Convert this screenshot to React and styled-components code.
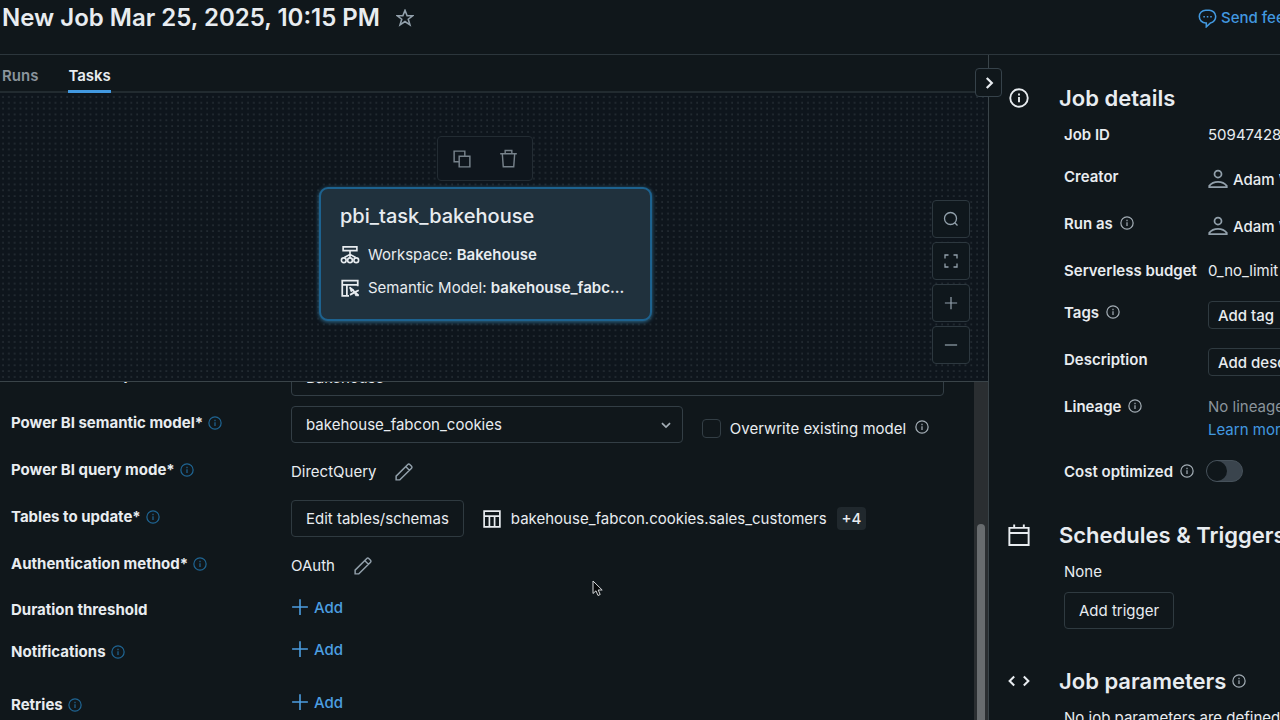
import React from 'react';
import styled, { createGlobalStyle } from 'styled-components';

const GlobalStyle = createGlobalStyle`
    * {
        box-sizing: border-box;
    }
    body {
        margin: 0;
        background: #10171b;
        color: #e8ecf0;
        font-family: Inter, "Liberation Sans", sans-serif;
        font-size: 15px;
        line-height: 23px;
    }
    button, input, select {
        font: inherit;
        color: inherit;
    }
    a {
        color: #4299e0;
        text-decoration: none;
    }
    svg {
        flex: none;
    }
`;

// layout
const Page = styled.div`
    display: flex;
    flex-direction: column;
    height: 100vh;
    overflow: hidden;
`;
const Header = styled.header`
    display: flex;
    align-items: flex-start;
    justify-content: space-between;
    height: 55px;
    padding: 4px 0 0 2px;
    border-bottom: 1px solid #2c363c;
`;
const TitleGroup = styled.div`
    display: flex;
    align-items: center;
    gap: 16px;
`;
const Title = styled.h1`
    margin: 0;
    font-size: 24px;
    line-height: 28px;
    font-weight: 600;
`;
const Feedback = styled.a`
    display: flex;
    align-items: center;
    gap: 4px;
    width: 82px;
    line-height: 28px;
    font-weight: 500;
    white-space: nowrap;
`;
const Main = styled.main`
    flex: 1;
    min-height: 0;
    display: grid;
    grid-template-columns: minmax(0, 1fr) 291px;
`;
const Left = styled.div`
    display: flex;
    flex-direction: column;
    min-height: 0;
    position: relative;
    border-right: 1px solid #3a4449;
`;
const PlainButton = styled.button`
    display: flex;
    align-items: center;
    justify-content: center;
    padding: 0;
    border: 0;
    background: none;
    color: ${(p) => p.$color || '#92a0ab'};
    cursor: pointer;
`;

// tabs
const Tabs = styled.nav`
    display: flex;
    gap: 30px;
    padding-left: 2px;
    border-bottom: 2px solid #222b30;
`;
const Tab = styled.a`
    margin-bottom: -2px;
    padding: 9px 0 3px;
    font-weight: 600;
    color: ${(p) => (p.$active ? '#e8ecf0' : '#8a949c')};
    border-bottom: 3px solid ${(p) => (p.$active ? '#4299e0' : 'transparent')};
`;
const Collapse = styled(PlainButton)`
    position: absolute;
    z-index: 2;
    top: 13px;
    right: -14px;
    width: 27px;
    height: 29px;
    border: 1px solid #36424a;
    border-radius: 4px;
    background: #10171b;
`;

// canvas
const Canvas = styled.section`
    position: relative;
    height: 289px;
    flex: none;
    overflow: hidden;
    background: #0e151c;
    border-bottom: 1px solid #3a4449;
`;
const Dots = styled.svg`
    display: block;
    width: 100%;
    height: 100%;
`;
const NodeToolbar = styled.div`
    position: absolute;
    top: 43px;
    left: calc(50% - 57px);
    display: flex;
    width: 96px;
    height: 45px;
    border: 1px solid #232c33;
    border-radius: 4px;
    background: #0f161d;
    button {
        flex: 1;
    }
`;
const Node = styled.article`
    position: absolute;
    top: 94px;
    left: calc(50% - 175px);
    width: 333px;
    height: 134px;
    padding: 13px 19px;
    border: 2px solid #1d628f;
    border-radius: 9px;
    background: #20313d;
    box-shadow: 0 1px 4px #2f6d8f;
`;
const NodeTitle = styled.h2`
    margin: 0 0 8px;
    font-size: 20px;
    line-height: 28px;
    font-weight: 500;
`;
const NodeLine = styled.div`
    display: flex;
    align-items: center;
    gap: 8px;
    height: 33px;
    white-space: nowrap;
    b {
        font-weight: 600;
    }
`;
const Controls = styled.div`
    position: absolute;
    right: 18px;
    bottom: 17px;
    display: grid;
    gap: 4px;
`;
const Control = styled(PlainButton)`
    width: 38px;
    height: 38px;
    border: 1px solid #2d383f;
    border-radius: 4px;
    background: #0f171c;
`;

// task form
const FormPane = styled.section`
    flex: 1;
    min-height: 0;
    display: flex;
    overflow: hidden;
`;
const Form = styled.form`
    flex: 1;
    min-width: 0;
    margin-top: -24px;
    padding: 0 30px 0 11px;
`;
const FormRow = styled.div`
    display: grid;
    grid-template-columns: 280px minmax(0, 1fr);
    min-height: ${(p) => (p.$height || 37)}px;
    margin-bottom: 10px;
`;
const FieldLabel = styled.div`
    display: flex;
    align-items: center;
    align-self: start;
    gap: 5px;
    padding-top: ${(p) => (p.$low ? 4 : 5)}px;
    font-weight: 700;
    svg {
        color: #1f6593;
    }
`;
const FieldValue = styled.div`
    display: flex;
    align-items: ${(p) => (p.$top ? 'flex-start' : 'center')};
    gap: 19px;
    white-space: nowrap;
`;
const TextBox = styled.input`
    width: 100%;
    height: 38px;
    padding: 0 14px;
    border: 1px solid #333e45;
    border-radius: 4px;
    background: transparent;
`;
const SelectBox = styled.div`
    flex: 0 0 60%;
    display: grid;
    align-items: center;
    > * {
        grid-area: 1 / 1;
    }
    svg {
        justify-self: end;
        margin-right: 12px;
        color: #a3adb5;
        pointer-events: none;
    }
    select {
        appearance: none;
        height: 37px;
        padding: 0 14px;
        border: 1px solid #333e45;
        border-radius: 4px;
        background: #10171b;
    }
`;
const CheckLabel = styled.label`
    display: flex;
    align-items: center;
    gap: 9px;
    padding-top: 8px;
    input {
        appearance: none;
        width: 19px;
        height: 19px;
        margin: 0;
        border: 1px solid #333e45;
        border-radius: 4px;
    }
    svg {
        margin-bottom: 4px;
        color: #a3adb5;
    }
`;
const Button = styled.button`
    height: ${(p) => (p.$small ? 28 : 37)}px;
    padding: 0 ${(p) => (p.$small ? 9 : 14)}px;
    border: 1px solid #2f3a40;
    border-radius: 4px;
    background: transparent;
    font-weight: ${(p) => (p.$small ? 500 : 400)};
    white-space: nowrap;
    cursor: pointer;
`;
const TableName = styled.div`
    display: flex;
    align-items: center;
    gap: 10px;
`;
const Badge = styled.span`
    padding: 0 5px;
    border-radius: 4px;
    background: #20282d;
    font-weight: 500;
`;
const AddButton = styled(PlainButton)`
    gap: 5px;
    height: 26px;
    color: #4c9fe2;
    font-weight: 500;
`;
const ScrollTrack = styled.div`
    display: flex;
    align-items: flex-end;
    justify-content: center;
    width: 14px;
    background: #2a2e31;
`;
const ScrollThumb = styled.div`
    width: 8px;
    height: 58%;
    border-radius: 4px 4px 0 0;
    background: #686c6f;
`;

// side panel
const Side = styled.aside`
    display: flex;
    flex-direction: column;
    gap: 38px;
    padding: 29px 0 0 19px;
    overflow: hidden;
`;
const Section = styled.section`
    display: grid;
    grid-template-columns: 22px 1fr;
    column-gap: 29px;
    row-gap: 11px;
    align-items: center;
    white-space: nowrap;
    > svg {
        justify-self: center;
    }
`;
const SectionTitle = styled.h2`
    display: flex;
    align-items: center;
    gap: 6px;
    margin: 0;
    font-size: 22px;
    line-height: 28px;
    font-weight: 600;
    svg {
        color: #a3adb5;
    }
`;
const SectionBody = styled.div`
    grid-column: 2;
    display: flex;
    flex-direction: column;
    align-items: flex-start;
    gap: ${(p) => (p.$gap || 9)}px;
    padding-left: 5px;
`;
const Detail = styled.div`
    display: grid;
    grid-template-columns: 144px auto;
`;
const DetailLabel = styled.div`
    display: flex;
    align-items: center;
    align-self: start;
    gap: 7px;
    font-weight: 600;
    svg {
        margin-bottom: 2px;
        color: #a3adb5;
    }
`;
const Person = styled.div`
    display: flex;
    align-items: center;
    gap: 5px;
    height: 28px;
    font-weight: 500;
    svg {
        color: #92a0ab;
    }
`;
const Muted = styled.div`
    color: #8a949c;
`;
const Switch = styled.input`
    appearance: none;
    display: flex;
    align-items: center;
    width: 37px;
    height: 22px;
    margin: 0 0 0 -2px;
    border: 1px solid #46515a;
    border-radius: 11px;
    background: #3a444d;
    &::before {
        content: '';
        width: 20px;
        height: 20px;
        border-radius: 50%;
        background: #10171b;
    }
`;

// icons
const Icon = ({ size = 16, width = 1.5, children }) => (
    <svg width={size} height={size} viewBox="0 0 16 16" fill="none" stroke="currentColor" strokeWidth={width} aria-hidden="true">
        {children}
    </svg>
);
const InfoIcon = ({ size = 14, width = 1.4 }) => (
    <Icon size={size} width={width}>
        <circle cx="8" cy="8" r="7" />
        <path d="M8 7.2v4.2M8 4.4v1.5" />
    </Icon>
);
const StarIcon = () => (
    <Icon size={18} width={1.4}>
        <path d="M8 1.2 9.900 6h5l-4 3.100 1.500 5L8 11.100l-4.400 3 1.500-5L1.100 6h5z" />
    </Icon>
);
const FeedbackIcon = () => (
    <Icon size={19} width={1.3}>
        <path d="M6.500 1h3a5.400 5.400 0 0 1 1 10.700L7 15v-3.200h-.5A5.400 5.400 0 0 1 6.500 1z" />
        <path d="M4.500 6.500h1.300M7.400 6.500h1.300M10.300 6.500h1.300" />
    </Icon>
);
const CopyIcon = () => (
    <Icon size={18} width={1.3}>
        <path d="M5.500 10.500H1V1h9.500v4.500" />
        <path d="M5.500 5.500H15V15H5.500z" />
    </Icon>
);
const TrashIcon = () => (
    <Icon size={19} width={1.2}>
        <path d="M1 4h14M5.200 4V1.300h5.600V4M2.800 4l.8 11h8.800l.8-11" />
    </Icon>
);
const WorkspaceIcon = () => (
    <Icon size={20} width={1.3}>
        <path d="M2.500 1.500h11v3h-11zM8 4.500v3M3.500 10 8 7.500l4.500 2.500M8 7.500v2.800" />
        <circle cx="3" cy="12.200" r="1.900" />
        <circle cx="8" cy="12.200" r="1.900" />
        <circle cx="13" cy="12.200" r="1.900" />
    </Icon>
);
const ModelIcon = () => (
    <Icon size={20} width={1.4}>
        <path d="M7.200 14.300H1.800V2h12.400v4.500M1.800 5.500h12.400M5.500 5.500v8.800" />
        <path d="m7.800 7.500 7 6.500M15 9.800l-3.500 1.700-3.500 2" />
        <path d="m7.800 7.500 1 3.500 2.200-1.500zM11.500 11.500l3.500 2.700h-2.500z" fill="currentColor" strokeWidth="0.600" />
    </Icon>
);
const SearchIcon = () => (
    <Icon width={1.3}>
        <circle cx="7.500" cy="7.500" r="6" />
        <path d="m11.800 11.800 2.700 2.700" />
    </Icon>
);
const FitIcon = () => (
    <Icon width={1.3}>
        <path d="M2 5.500V2h3.500M10.500 2H14v3.500M14 10.500V14h-3.500M5.500 14H2v-3.500" />
    </Icon>
);
const PlusIcon = ({ size = 18 }) => (
    <Icon size={size} width={1.4}>
        <path d="M8 1v14M1 8h14" />
    </Icon>
);
const MinusIcon = () => (
    <Icon size={14} width={1.4}>
        <path d="M1 8h14" />
    </Icon>
);
const ChevronRight = () => (
    <Icon size={18} width={2}>
        <path d="m6 3.500 4.500 4.500L6 12.500" />
    </Icon>
);
const ChevronDown = () => (
    <Icon size={10} width={2.6}>
        <path d="m1.500 5 6.500 6.500L14.500 5" />
    </Icon>
);
const PencilIcon = () => (
    <Icon size={18} width={1.3}>
        <path d="M1 15v-3.300L11.400 1.300a1.200 1.200 0 0 1 1.700 0l1.600 1.600a1.200 1.200 0 0 1 0 1.700L4.300 15zM9.500 3.200l3.300 3.300" />
    </Icon>
);
const TableIcon = () => (
    <Icon size={18} width={1.5}>
        <path d="M1 1h14v14H1zM1 5.500h14M5.700 5.500V15M10.300 5.500V15" />
    </Icon>
);
const UserIcon = () => (
    <Icon size={20} width={1.4}>
        <circle cx="8" cy="4" r="2.800" />
        <path d="M1 14.500v-1C2.500 11.500 5 10.200 8 10.200s5.500 1.300 7 3.300v1z" />
    </Icon>
);
const CalendarIcon = () => (
    <Icon size={22} width={1.4}>
        <path d="M1 2.800h14v12.500H1zM1 6.500h14M4.500.3v2.500M11.500.3v2.500" />
    </Icon>
);
const CodeIcon = () => (
    <Icon size={22} width={1.5}>
        <path d="M4.500 4.800 1.200 8l3.300 3.200M11.500 4.800 14.800 8l-3.300 3.200" />
    </Icon>
);
const Pointer = styled.svg`
    position: absolute;
    left: 592px;
    bottom: 123px;
`;

const Label = ({ text, low, info = true }) => (
    <FieldLabel $low={low}>
        {text}
        {info && <InfoIcon />}
    </FieldLabel>
);

// data
const addRows = [
    { label: 'Duration threshold', info: false, height: 32 },
    { label: 'Notifications', info: true, height: 43 },
    { label: 'Retries', info: true, height: 32 },
];

const TaskForm = () => (
    <FormPane>
        <Form>
            <FormRow>
                <Label text="Power BI workspace*" />
                <FieldValue>
                    <TextBox aria-label="Power BI workspace" defaultValue="Bakehouse" />
                </FieldValue>
            </FormRow>
            <FormRow>
                <Label text="Power BI semantic model*" />
                <FieldValue>
                    <SelectBox>
                        <select aria-label="Power BI semantic model">
                            <option>bakehouse_fabcon_cookies</option>
                        </select>
                        <ChevronDown />
                    </SelectBox>
                    <CheckLabel>
                        <input type="checkbox" />
                        Overwrite existing model
                        <InfoIcon />
                    </CheckLabel>
                </FieldValue>
            </FormRow>
            <FormRow>
                <Label text="Power BI query mode*" />
                <FieldValue>
                    DirectQuery
                    <PlainButton type="button" aria-label="Edit query mode"><PencilIcon /></PlainButton>
                </FieldValue>
            </FormRow>
            <FormRow>
                <Label text="Tables to update*" />
                <FieldValue>
                    <Button type="button">Edit tables/schemas</Button>
                    <TableName>
                        <TableIcon />
                        bakehouse_fabcon.cookies.sales_customers
                        <Badge>+4</Badge>
                    </TableName>
                </FieldValue>
            </FormRow>
            <FormRow>
                <Label text="Authentication method*" />
                <FieldValue>
                    OAuth
                    <PlainButton type="button" aria-label="Edit authentication method"><PencilIcon /></PlainButton>
                </FieldValue>
            </FormRow>
            {addRows.map((row) => (
                <FormRow key={row.label} $height={row.height}>
                    <Label text={row.label} info={row.info} low />
                    <FieldValue $top>
                        <AddButton type="button"><PlusIcon />Add</AddButton>
                    </FieldValue>
                </FormRow>
            ))}
        </Form>
        <ScrollTrack>
            <ScrollThumb />
        </ScrollTrack>
    </FormPane>
);

const JobDetails = () => (
    <Section>
        <InfoIcon size={20} width={1.5} />
        <SectionTitle>Job details</SectionTitle>
        <SectionBody $gap={19}>
            <Detail>
                <DetailLabel>Job ID</DetailLabel>
                <div>509474283</div>
            </Detail>
            <Detail>
                <DetailLabel>Creator</DetailLabel>
                <Person><UserIcon />Adam W</Person>
            </Detail>
            <Detail>
                <DetailLabel>Run as <InfoIcon /></DetailLabel>
                <Person><UserIcon />Adam W</Person>
            </Detail>
            <Detail>
                <DetailLabel>Serverless budget</DetailLabel>
                <div>0_no_limit</div>
            </Detail>
            <Detail>
                <DetailLabel>Tags <InfoIcon /></DetailLabel>
                <Button type="button" $small>Add tag</Button>
            </Detail>
            <Detail>
                <DetailLabel>Description</DetailLabel>
                <Button type="button" $small>Add description</Button>
            </Detail>
            <Detail>
                <DetailLabel>Lineage <InfoIcon /></DetailLabel>
                <div>
                    <Muted>No lineage</Muted>
                    <a href="#lineage">Learn more</a>
                </div>
            </Detail>
            <Detail>
                <DetailLabel as="label" htmlFor="cost">Cost optimized <InfoIcon /></DetailLabel>
                <Switch id="cost" type="checkbox" role="switch" />
            </Detail>
        </SectionBody>
    </Section>
);

const App = () => (
    <Page>
        <GlobalStyle />
        <Header>
            <TitleGroup>
                <Title>New Job Mar 25, 2025, 10:15 PM</Title>
                <PlainButton type="button" aria-label="Favorite"><StarIcon /></PlainButton>
            </TitleGroup>
            <Feedback href="#feedback"><FeedbackIcon />Send feedback</Feedback>
        </Header>
        <Main>
            <Left>
                <Tabs>
                    <Tab href="#runs">Runs</Tab>
                    <Tab href="#tasks" $active>Tasks</Tab>
                </Tabs>
                <Collapse type="button" aria-label="Collapse panel" $color="#e8ecf0"><ChevronRight /></Collapse>
                <Canvas>
                    <Dots aria-hidden="true">
                        <defs>
                            <pattern id="dots" width="5.833" height="5.833" patternUnits="userSpaceOnUse">
                                <circle cx="3" cy="4" r="0.8" fill="#323b42" />
                            </pattern>
                        </defs>
                        <rect width="100%" height="100%" fill="url(#dots)" />
                    </Dots>
                    <NodeToolbar>
                        <PlainButton type="button" aria-label="Clone task" $color="#77828b"><CopyIcon /></PlainButton>
                        <PlainButton type="button" aria-label="Delete task" $color="#77828b"><TrashIcon /></PlainButton>
                    </NodeToolbar>
                    <Node>
                        <NodeTitle>pbi_task_bakehouse</NodeTitle>
                        <NodeLine>
                            <WorkspaceIcon />
                            <span>Workspace: <b>Bakehouse</b></span>
                        </NodeLine>
                        <NodeLine>
                            <ModelIcon />
                            <span>Semantic Model: <b>bakehouse_fabc...</b></span>
                        </NodeLine>
                    </Node>
                    <Controls>
                        <Control type="button" aria-label="Search"><SearchIcon /></Control>
                        <Control type="button" aria-label="Fit view"><FitIcon /></Control>
                        <Control type="button" aria-label="Zoom in"><PlusIcon size={14} /></Control>
                        <Control type="button" aria-label="Zoom out"><MinusIcon /></Control>
                    </Controls>
                </Canvas>
                <TaskForm />
                <Pointer width="11" height="17" viewBox="0 0 11 17" aria-hidden="true">
                    <path d="M1 1v12.500l3-2.700 2 4.700 2.200-1-2-4.500h4z" fill="#050708" stroke="#d5d8da" />
                </Pointer>
            </Left>
            <Side>
                <JobDetails />
                <Section>
                    <CalendarIcon />
                    <SectionTitle>Schedules &amp; Triggers</SectionTitle>
                    <SectionBody>
                        <div>None</div>
                        <Button type="button">Add trigger</Button>
                    </SectionBody>
                </Section>
                <Section>
                    <CodeIcon />
                    <SectionTitle>Job parameters <InfoIcon /></SectionTitle>
                    <SectionBody>
                        <div>No job parameters are defined</div>
                    </SectionBody>
                </Section>
            </Side>
        </Main>
    </Page>
);

export default App;
